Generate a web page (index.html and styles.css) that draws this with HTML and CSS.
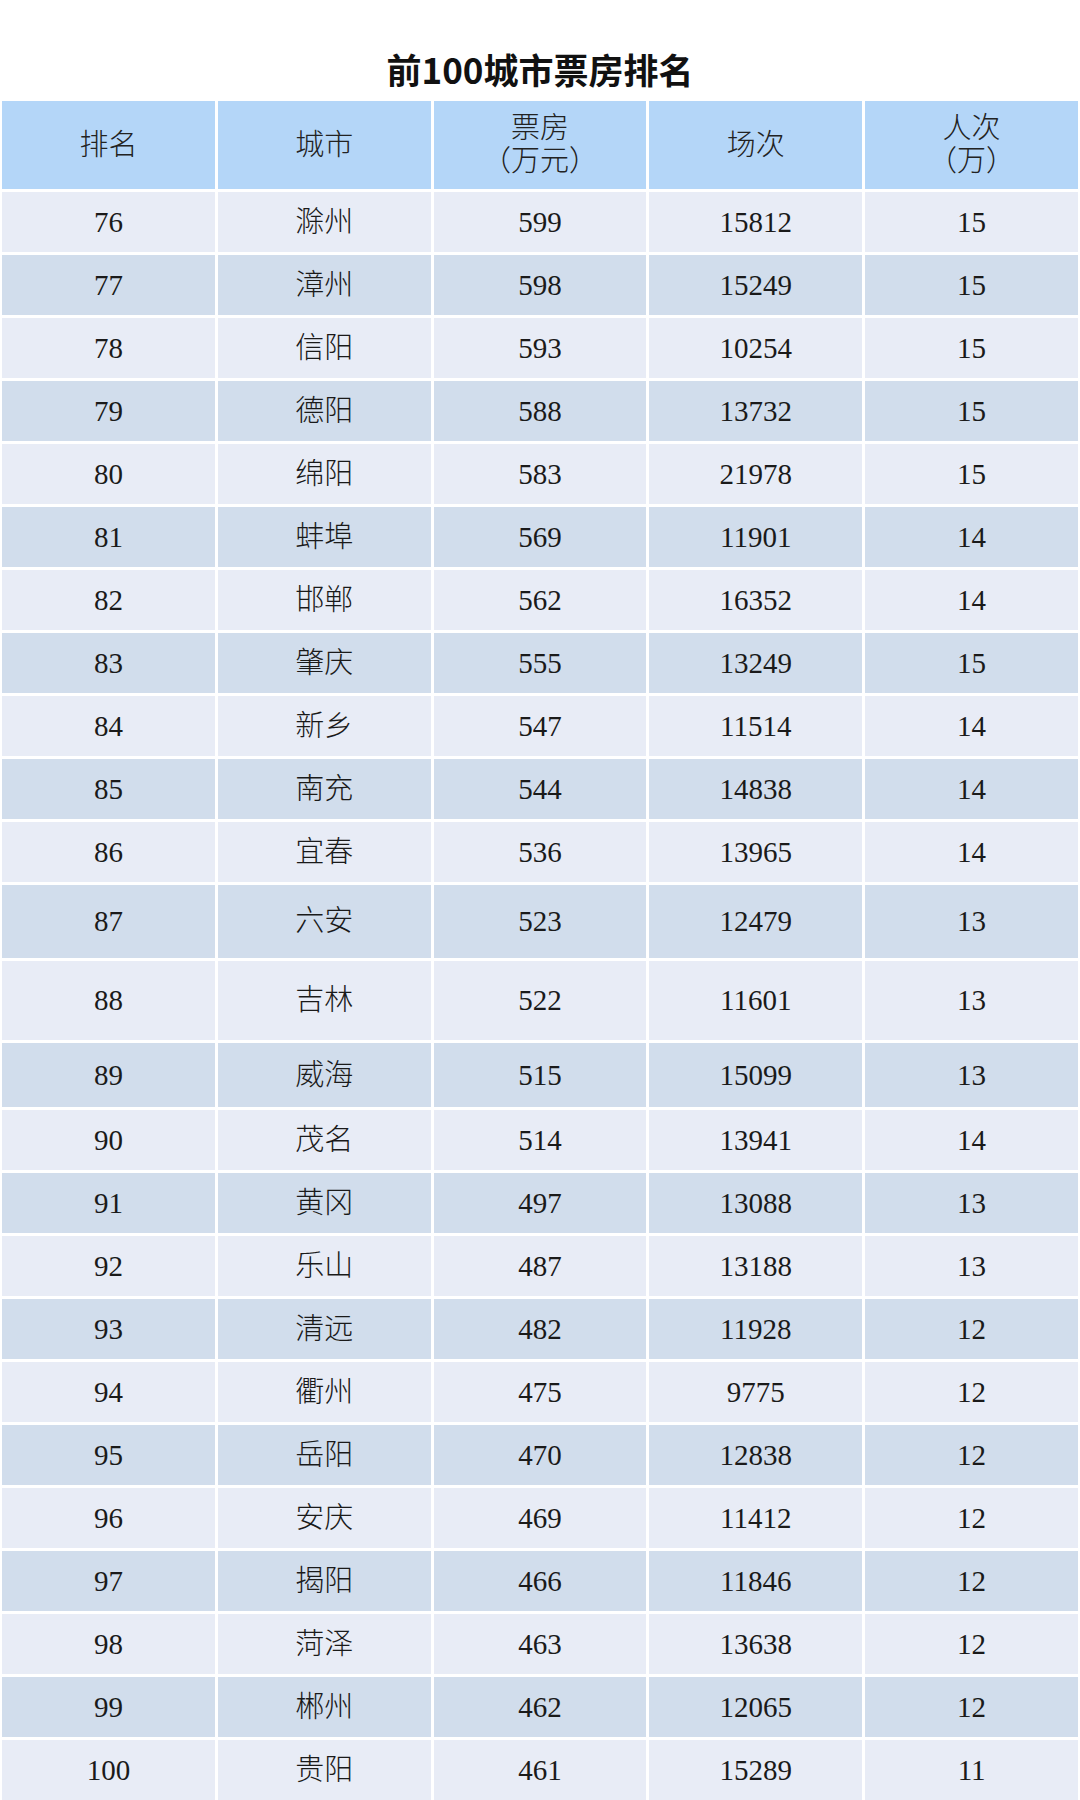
FILE: index.html
```html
<!DOCTYPE html>
<html lang="zh-CN">
<head>
<meta charset="utf-8">
<title>前100城市票房排名</title>
<link rel="stylesheet" href="styles.css">
</head>
<body>
<div class="page">
  <h1 class="title">前100城市票房排名</h1>
  <div class="table">
    <div class="row head">
      <div class="cell">排名</div>
      <div class="cell">城市</div>
      <div class="cell two"><span>票房</span><span>（万元）</span></div>
      <div class="cell">场次</div>
      <div class="cell two"><span>人次</span><span>（万）</span></div>
    </div>
    <div class="row odd"><div class="cell">76</div><div class="cell">滁州</div><div class="cell">599</div><div class="cell">15812</div><div class="cell">15</div></div>
    <div class="row even"><div class="cell">77</div><div class="cell">漳州</div><div class="cell">598</div><div class="cell">15249</div><div class="cell">15</div></div>
    <div class="row odd"><div class="cell">78</div><div class="cell">信阳</div><div class="cell">593</div><div class="cell">10254</div><div class="cell">15</div></div>
    <div class="row even"><div class="cell">79</div><div class="cell">德阳</div><div class="cell">588</div><div class="cell">13732</div><div class="cell">15</div></div>
    <div class="row odd"><div class="cell">80</div><div class="cell">绵阳</div><div class="cell">583</div><div class="cell">21978</div><div class="cell">15</div></div>
    <div class="row even"><div class="cell">81</div><div class="cell">蚌埠</div><div class="cell">569</div><div class="cell">11901</div><div class="cell">14</div></div>
    <div class="row odd"><div class="cell">82</div><div class="cell">邯郸</div><div class="cell">562</div><div class="cell">16352</div><div class="cell">14</div></div>
    <div class="row even"><div class="cell">83</div><div class="cell">肇庆</div><div class="cell">555</div><div class="cell">13249</div><div class="cell">15</div></div>
    <div class="row odd"><div class="cell">84</div><div class="cell">新乡</div><div class="cell">547</div><div class="cell">11514</div><div class="cell">14</div></div>
    <div class="row even"><div class="cell">85</div><div class="cell">南充</div><div class="cell">544</div><div class="cell">14838</div><div class="cell">14</div></div>
    <div class="row odd"><div class="cell">86</div><div class="cell">宜春</div><div class="cell">536</div><div class="cell">13965</div><div class="cell">14</div></div>
    <div class="row even h73"><div class="cell">87</div><div class="cell">六安</div><div class="cell">523</div><div class="cell">12479</div><div class="cell">13</div></div>
    <div class="row odd h79"><div class="cell">88</div><div class="cell">吉林</div><div class="cell">522</div><div class="cell">11601</div><div class="cell">13</div></div>
    <div class="row even h64"><div class="cell">89</div><div class="cell">威海</div><div class="cell">515</div><div class="cell">15099</div><div class="cell">13</div></div>
    <div class="row odd"><div class="cell">90</div><div class="cell">茂名</div><div class="cell">514</div><div class="cell">13941</div><div class="cell">14</div></div>
    <div class="row even"><div class="cell">91</div><div class="cell">黄冈</div><div class="cell">497</div><div class="cell">13088</div><div class="cell">13</div></div>
    <div class="row odd"><div class="cell">92</div><div class="cell">乐山</div><div class="cell">487</div><div class="cell">13188</div><div class="cell">13</div></div>
    <div class="row even"><div class="cell">93</div><div class="cell">清远</div><div class="cell">482</div><div class="cell">11928</div><div class="cell">12</div></div>
    <div class="row odd"><div class="cell">94</div><div class="cell">衢州</div><div class="cell">475</div><div class="cell">9775</div><div class="cell">12</div></div>
    <div class="row even"><div class="cell">95</div><div class="cell">岳阳</div><div class="cell">470</div><div class="cell">12838</div><div class="cell">12</div></div>
    <div class="row odd"><div class="cell">96</div><div class="cell">安庆</div><div class="cell">469</div><div class="cell">11412</div><div class="cell">12</div></div>
    <div class="row even"><div class="cell">97</div><div class="cell">揭阳</div><div class="cell">466</div><div class="cell">11846</div><div class="cell">12</div></div>
    <div class="row odd"><div class="cell">98</div><div class="cell">菏泽</div><div class="cell">463</div><div class="cell">13638</div><div class="cell">12</div></div>
    <div class="row even"><div class="cell">99</div><div class="cell">郴州</div><div class="cell">462</div><div class="cell">12065</div><div class="cell">12</div></div>
    <div class="row odd"><div class="cell">100</div><div class="cell">贵阳</div><div class="cell">461</div><div class="cell">15289</div><div class="cell">11</div></div>
  </div>
</div>
</body>
</html>
```
FILE: styles.css
```css
* { box-sizing: border-box; }
html, body {
  margin: 0;
  padding: 0;
  background: #ffffff;
}
.page {
  width: 1080px;
  height: 1800px;
  overflow: hidden;
  background: #ffffff;
}
.title {
  margin: 0;
  height: 100px;
  padding-top: 51px;
  text-align: center;
  font-family: "Noto Sans CJK SC", "Noto Sans", sans-serif;
  font-weight: 700;
  font-size: 35px;
  line-height: 35px;
  color: #111111;
}
.table {
  display: flex;
  flex-direction: column;
  gap: 3px;
  padding-left: 2px;
  width: 1078px;
  padding-top: 1px;
}
.row {
  display: grid;
  grid-template-columns: repeat(5, 1fr);
  gap: 3px;
  height: 60px;
}
.row.head { height: 88px; }
.row.h73 { height: 73px; }
.row.h79 { height: 79px; }
.row.h64 { height: 64px; }
.cell {
  display: flex;
  flex-direction: column;
  align-items: center;
  justify-content: center;
  font-family: "Liberation Serif", "Times New Roman", Tinos, "Noto Sans CJK SC", serif;
  font-weight: 300;
  font-size: 29px;
  line-height: 33px;
  color: #1a1a1a;
}
.row.head .cell { background: #b4d6f8; color: #222222; }
.row.odd .cell { background: #e8ecf6; }
.row.even .cell { background: #d1ddec; }
.cell.two span { display: block; }
```
